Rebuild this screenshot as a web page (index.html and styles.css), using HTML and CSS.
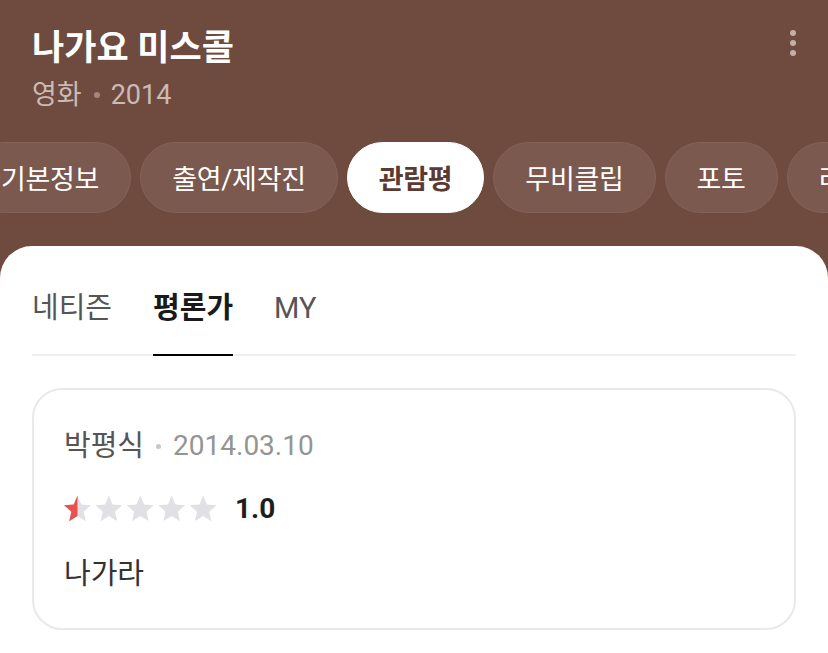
FILE: index.html
```html
<!DOCTYPE html>
<html lang="ko">
<head>
<meta charset="utf-8">
<title>나가요 미스콜</title>
<link rel="stylesheet" href="styles.css">
</head>
<body>
<header class="header">
  <div class="heading">
    <h1 class="title">나가요 미스콜</h1>
    <div class="meta"><span>영화</span><span class="meta-sep"></span><span>2014</span></div>
  </div>
  <button class="menu" aria-label="더보기"><span class="menu-dot"></span><span class="menu-dot"></span><span class="menu-dot"></span></button>
</header>
<nav class="chips">
  <div class="chips-track">
    <span class="chip">기본정보</span>
    <span class="chip">출연/제작진</span>
    <span class="chip active">관람평</span>
    <span class="chip">무비클립</span>
    <span class="chip">포토</span>
    <span class="chip">리뷰</span>
  </div>
</nav>
<main class="sheet">
  <div class="subtabs">
    <span class="subtab">네티즌</span>
    <span class="subtab active">평론가</span>
    <span class="subtab">MY</span>
  </div>
  <article class="review">
    <div class="review-head"><span class="name">박평식</span><span class="head-sep"></span><span class="date">2014.03.10</span></div>
    <div class="rating">
      <svg class="stars" width="158" height="27" viewBox="0 0 158 27" aria-hidden="true">
        <defs>
          <path id="star" d="M12 17.27L18.18 21l-1.64-7.03L22 9.24l-7.19-.61L12 2 9.19 8.63 2 9.24l5.46 4.73L5.82 21z"/>
          <clipPath id="half"><rect x="0" y="0" width="12" height="24"/></clipPath>
        </defs>
        <g fill="#e1e1e5">
          <use href="#star" transform="translate(-2.7,-2.2) scale(1.35)"/>
          <use href="#star" transform="translate(28.7,-2.2) scale(1.35)"/>
          <use href="#star" transform="translate(60.1,-2.2) scale(1.35)"/>
          <use href="#star" transform="translate(91.5,-2.2) scale(1.35)"/>
          <use href="#star" transform="translate(122.9,-2.2) scale(1.35)"/>
        </g>
        <g transform="translate(-2.7,-2.2) scale(1.35)">
          <use href="#star" fill="#e9514f" clip-path="url(#half)"/>
        </g>
      </svg>
      <span class="score">1.0</span>
    </div>
    <p class="comment">나가라</p>
  </article>
</main>
</body>
</html>
```
FILE: styles.css
```css
html, body {
  margin: 0;
  padding: 0;
}
body {
  background: #6f4a3f;
  font-family: Roboto, "Noto Sans CJK KR", sans-serif;
  width: 828px;
  height: 653px;
  overflow: hidden;
}
.header {
  display: flex;
  justify-content: space-between;
  align-items: flex-start;
  padding: 27px 32px 0;
}
.title {
  margin: 0;
  font-size: 35px;
  font-weight: 700;
  line-height: 44px;
  color: #ffffff;
}
.meta {
  margin-top: 5px;
  font-size: 27px;
  line-height: 38px;
  color: #cbbab5;
  display: flex;
  align-items: center;
}
.meta-sep {
  width: 6px;
  height: 6px;
  border-radius: 50%;
  background: #a3877f;
  margin: 0 11px 0 12px;
}
.menu {
  margin: 3px 0 0;
  padding: 0;
  border: 0;
  background: none;
  width: 6px;
  display: flex;
  flex-direction: column;
  gap: 4px;
}
.menu-dot {
  width: 6px;
  height: 6px;
  border-radius: 50%;
  background: #c3aea8;
}
.chips {
  margin-top: 28px;
  overflow: hidden;
}
.chips-track {
  display: flex;
  gap: 9px;
  margin-left: -31px;
}
.chip {
  flex: none;
  box-sizing: border-box;
  height: 71px;
  padding: 0 31px;
  border-radius: 36px;
  background: #7b594f;
  border: 1px solid #83625a;
  color: #ffffff;
  font-size: 27px;
  letter-spacing: -0.3px;
  display: flex;
  align-items: center;
  white-space: nowrap;
}
.chip.active {
  background: #ffffff;
  border-color: #ffffff;
  color: #5b3b31;
  font-weight: 700;
}
.sheet {
  margin-top: 33px;
  background: #ffffff;
  border-radius: 32px 32px 0 0;
  padding: 0 32px;
  min-height: 430px;
}
.subtabs {
  display: flex;
  gap: 41px;
  padding-top: 42px;
  border-bottom: 2px solid #f0f0f0;
}
.subtab {
  font-size: 29px;
  line-height: 40px;
  color: #555555;
  padding-bottom: 26px;
  border-bottom: 2px solid transparent;
  margin-bottom: -2px;
}
.subtab.active {
  color: #1a1a1a;
  font-weight: 700;
  border-bottom-color: #000000;
}
.review {
  margin-top: 32px;
  border: 2px solid #e9e9ec;
  border-radius: 30px;
  padding: 37px 30px 35px;
}
.review-head {
  display: flex;
  align-items: center;
  font-size: 29px;
  line-height: 38px;
  color: #555555;
}
.head-sep {
  width: 5px;
  height: 5px;
  border-radius: 50%;
  background: #c8c8c8;
  margin: 0 12px 0 12px;
}
.date {
  color: #949494;
  font-size: 28px;
}
.rating {
  margin-top: 24px;
  height: 38px;
  display: flex;
  align-items: center;
  gap: 13px;
}
.stars {
  display: block;
}
.score {
  font-size: 28px;
  font-weight: 700;
  color: #1e1e1e;
}
.comment {
  margin: 28px 0 0;
  font-size: 29px;
  line-height: 38px;
  color: #333333;
}
```
